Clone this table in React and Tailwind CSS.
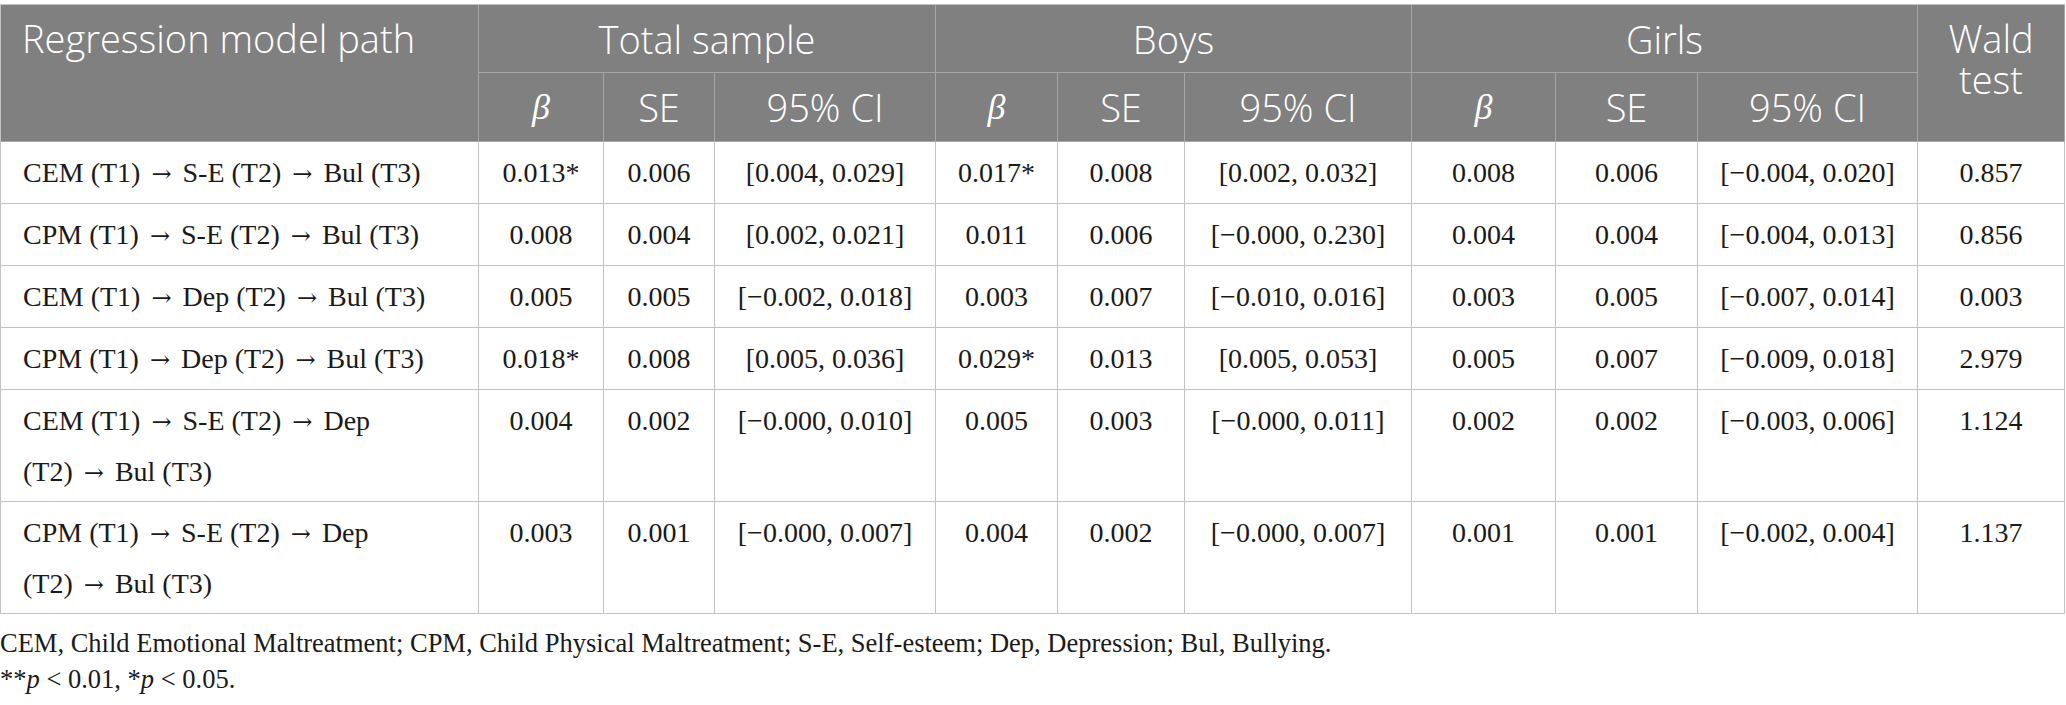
import React from "react";

const serif = { fontFamily: '"Liberation Serif", "Times New Roman", serif' };

const rows = [
  { path: ["CEM (T1) → S-E (T2) → Bul (T3)"], v: ["0.013*", "0.006", "[0.004, 0.029]", "0.017*", "0.008", "[0.002, 0.032]", "0.008", "0.006", "[−0.004, 0.020]", "0.857"] },
  { path: ["CPM (T1) → S-E (T2) → Bul (T3)"], v: ["0.008", "0.004", "[0.002, 0.021]", "0.011", "0.006", "[−0.000, 0.230]", "0.004", "0.004", "[−0.004, 0.013]", "0.856"] },
  { path: ["CEM (T1) → Dep (T2) → Bul (T3)"], v: ["0.005", "0.005", "[−0.002, 0.018]", "0.003", "0.007", "[−0.010, 0.016]", "0.003", "0.005", "[−0.007, 0.014]", "0.003"] },
  { path: ["CPM (T1) → Dep (T2) → Bul (T3)"], v: ["0.018*", "0.008", "[0.005, 0.036]", "0.029*", "0.013", "[0.005, 0.053]", "0.005", "0.007", "[−0.009, 0.018]", "2.979"] },
  { path: ["CEM (T1) → S-E (T2) → Dep", "(T2) → Bul (T3)"], v: ["0.004", "0.002", "[−0.000, 0.010]", "0.005", "0.003", "[−0.000, 0.011]", "0.002", "0.002", "[−0.003, 0.006]", "1.124"] },
  { path: ["CPM (T1) → S-E (T2) → Dep", "(T2) → Bul (T3)"], v: ["0.003", "0.001", "[−0.000, 0.007]", "0.004", "0.002", "[−0.000, 0.007]", "0.001", "0.001", "[−0.002, 0.004]", "1.137"] },
];

const H = "bg-[#7f807f] border-r border-b border-[#a6a6a6] text-white flex items-center justify-center";
const D = "border-r border-b border-[#c2c2c2] text-[#1a1a1a] text-center pt-[6px] leading-[50px]";

function Beta() {
  return <span className="italic" style={serif}>β</span>;
}

function PathText({ text }) {
  const parts = text.split("→");
  return (
    <>
      {parts.map((p, i) => (
        <React.Fragment key={i}>
          {p}
          {i < parts.length - 1 && (
            <span className="text-[24px] mx-[4px]" style={{ fontFamily: '"DejaVu Serif", serif' }}>→</span>
          )}
        </React.Fragment>
      ))}
    </>
  );
}

export default function App() {
  return (
    <div className="bg-white w-[2066px] h-[705px] overflow-hidden">
      <div className="pt-[4px]">
        <div
          className="grid grid-cols-[478px_125px_111px_221px_122px_127px_227px_144px_142px_220px_147px] grid-rows-[68px_69px_62px_62px_62px_62px_112px_112px] border-l border-t border-[#c2c2c2] w-[2065px]"
          style={{ fontFamily: '"Open Sans", Lato, sans-serif' }}
        >
          {/* header */}
          <div className={`${H} row-span-2 !items-start !justify-start pl-[21px] pt-[11px] text-[38px] font-light leading-[44px]`}>
            Regression model path
          </div>
          <div className={`${H} col-span-3 text-[38px] font-light leading-[44px]`}>Total sample</div>
          <div className={`${H} col-span-3 text-[38px] font-light leading-[44px]`}>Boys</div>
          <div className={`${H} col-span-3 text-[38px] font-light leading-[44px]`}>Girls</div>
          <div className={`${H} row-span-2 !flex-col !items-center !justify-start pt-[13px] text-[38px] font-light leading-[41px]`}>
            <div>Wald</div>
            <div>test</div>
          </div>
          {[0, 1, 2].map((g) => (
            <React.Fragment key={g}>
              <div className={`${H} text-[36px] leading-[44px]`}><Beta /></div>
              <div className={`${H} text-[38px] font-light leading-[44px]`}>SE</div>
              <div className={`${H} text-[38px] font-light leading-[44px]`}>95% CI</div>
            </React.Fragment>
          ))}
          {/* body */}
          {rows.map((r, i) => (
            <React.Fragment key={i}>
              <div className={`${D} !text-left pl-[22px] text-[28px]`} style={serif}>
                {r.path.map((p, j) => (
                  <div key={j}><PathText text={p} /></div>
                ))}
              </div>
              {r.v.map((v, j) => (
                <div key={j} className={`${D} text-[28px]`} style={serif}>
                  {v}
                </div>
              ))}
            </React.Fragment>
          ))}
        </div>
        <div className="text-[26.5px] text-[#1a1a1a] leading-[36px] pt-[11px]" style={serif}>
          <div>CEM, Child Emotional Maltreatment; CPM, Child Physical Maltreatment; S-E, Self-esteem; Dep, Depression; Bul, Bullying.</div>
          <div>
            **<span className="italic">p</span> &lt; 0.01, *<span className="italic">p</span> &lt; 0.05.
          </div>
        </div>
      </div>
    </div>
  );
}
